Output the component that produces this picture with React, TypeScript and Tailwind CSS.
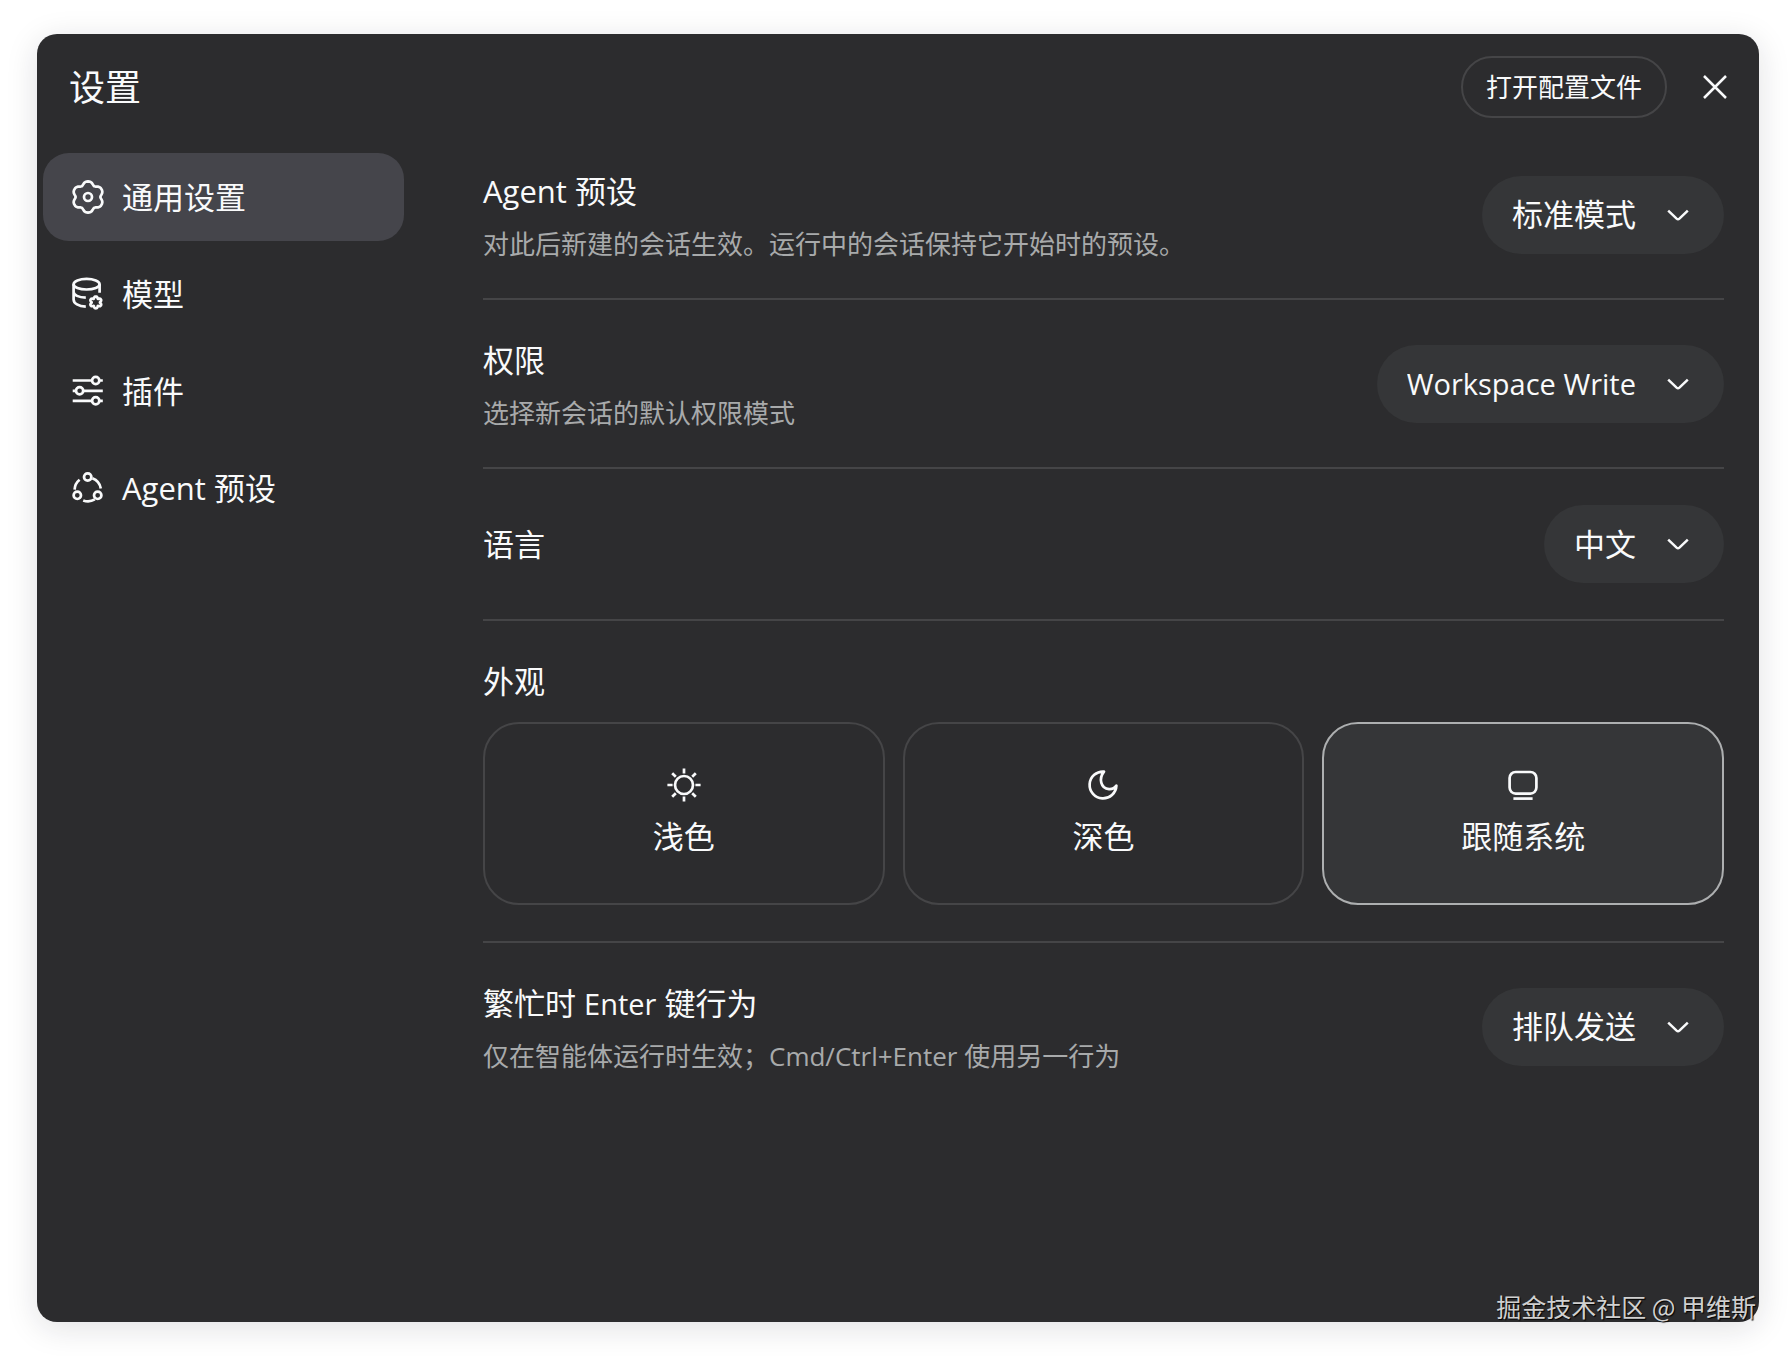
import React, { useState } from 'react';

interface IconProps {
  children: React.ReactNode;
}

interface SelectOption {
  value: string;
  label: string;
}

interface PillSelectProps {
  id: string;
  options: SelectOption[];
  latin?: boolean;
}

interface SettingRowProps extends PillSelectProps {
  title: React.ReactNode;
  description?: string;
  last?: boolean;
}

// Closed outline of a soft six-lobed gear around (cx, cy)
const gearPath = (cx: number, cy: number, radius: number, depth: number) => {
  const points: string[] = [];
  for (let deg = 0; deg < 360; deg += 5) {
    const rad = (deg * Math.PI) / 180;
    // the second harmonic flattens the lobes and tightens the valleys
    const r = radius + depth * Math.cos(6 * rad) - depth * 0.2 * Math.cos(12 * rad);
    points.push(`${(cx + r * Math.sin(rad)).toFixed(2)} ${(cy - r * Math.cos(rad)).toFixed(2)}`);
  }
  return `M${points.join('L')}Z`;
};

const Icon: React.FC<IconProps> = ({ children }) => (
  <svg
    viewBox="0 0 34 34"
    className="size-[34px] shrink-0"
    fill="none"
    stroke="currentColor"
    strokeWidth="2.7"
    strokeLinejoin="round"
    aria-hidden="true"
  >
    {children}
  </svg>
);

const GearIcon = () => (
  <Icon>
    <path d={gearPath(17, 17, 14.3, 1.6)} />
    <circle cx="17" cy="17" r="4" />
  </Icon>
);

const ModelIcon = () => (
  <Icon>
    <ellipse cx="15.6" cy="7.2" rx="13" ry="5.3" />
    <path d="M2.6 7.2V22.5C2.6 26.5 7.5 29.3 14.8 29.6M2.6 15C2.6 18 7.5 20.4 14.8 20.7M28.6 7.2V15.8" />
    <path d={gearPath(24.8, 25.4, 5.2, 0.9)} />
  </Icon>
);

const PluginIcon = () => (
  <Icon>
    <path d="M1.7 6.5H21M28.4 6.5H31.8M1.7 16.8H5M12.4 16.8H31.8M1.7 26.8H21M28.4 26.8H31.8" />
    <circle cx="24.7" cy="6.5" r="3.6" />
    <circle cx="8.6" cy="16.8" r="3.6" />
    <circle cx="24.7" cy="26.8" r="3.6" />
  </Icon>
);

const AgentIcon = () => (
  <Icon>
    <circle cx="16.7" cy="6" r="3.7" />
    <circle cx="6.3" cy="24.3" r="3.7" />
    <circle cx="26.7" cy="24.3" r="3.7" />
    <path d="M3.6 18.6A13.4 13.4 0 0 1 8.6 8.7M21.4 7.2A13.4 13.4 0 0 1 29.8 17.4M12.2 29.4A13.4 13.4 0 0 0 23.8 28.4" />
  </Icon>
);

const SunIcon = () => (
  <Icon>
    <circle cx="17" cy="17" r="9" />
    <path d="M17 .4V5.6M17 28.4V33.6M.4 17H5.6M28.4 17H33.6M5.2 5.2L8.8 8.8M25.2 25.2L28.8 28.8M5.2 28.8L8.8 25.2M25.2 8.8L28.8 5.2" />
  </Icon>
);

const MoonIcon = () => (
  <Icon>
    <path d="M18 3.6A13.4 13.4 0 1 0 30.4 17.6C28.6 20.3 26 21.4 23 21.2C14.5 20.4 12.6 10.4 18 3.6Z" />
  </Icon>
);

const SystemIcon = () => (
  <Icon>
    <rect x="3.6" y="4" width="26.8" height="21.6" rx="6" />
    <path d="M7.4 30.6H26.6" />
  </Icon>
);

const navItems = [
  { id: 'general', label: '通用设置', icon: <GearIcon /> },
  { id: 'models', label: '模型', icon: <ModelIcon /> },
  { id: 'plugins', label: '插件', icon: <PluginIcon /> },
  { id: 'presets', label: 'Agent 预设', icon: <AgentIcon /> },
];

const themes = [
  { id: 'light', label: '浅色', icon: <SunIcon /> },
  { id: 'dark', label: '深色', icon: <MoonIcon /> },
  { id: 'system', label: '跟随系统', icon: <SystemIcon /> },
];

const PillSelect: React.FC<PillSelectProps> = ({ id, options, latin }) => {
  const [value, setValue] = useState(options[0].value);

  return (
    <div className="relative shrink-0">
      <select
        id={id}
        value={value}
        onChange={(e) => setValue(e.target.value)}
        className={`field-sizing-content block h-[78px] cursor-pointer appearance-none rounded-full bg-[#353638] pr-[88px] pl-[30px] text-gray-50 ${
          latin ? 'text-[29px]' : 'text-[31px]'
        }`}
      >
        {options.map((option) => (
          <option key={option.value} value={option.value}>
            {option.label}
          </option>
        ))}
      </select>
      <svg
        viewBox="0 0 24 24"
        className="pointer-events-none absolute inset-y-0 right-[34px] my-auto size-6 text-gray-50"
        fill="none"
        stroke="currentColor"
        strokeWidth="2.5"
        aria-hidden="true"
      >
        <path d="M2.2 7.6L10.6 15.6Q12 16.8 13.4 15.6L21.8 7.6" />
      </svg>
    </div>
  );
};

const SettingRow: React.FC<SettingRowProps> = ({ id, title, description, options, latin, last }) => (
  <div
    className={`flex items-center justify-between gap-8 py-9 ${last ? '' : 'border-b-2 border-[#454547]'}`}
  >
    <div className="min-w-0">
      <label htmlFor={id} className="block text-[31px] leading-[48px] text-gray-50">
        {title}
      </label>
      {description && (
        <p className="mt-[11px] text-[26px] leading-9 text-[#a8aaab]">{description}</p>
      )}
    </div>
    <PillSelect id={id} options={options} latin={latin} />
  </div>
);

export default function App() {
  const [activeNav, setActiveNav] = useState('general');
  const [theme, setTheme] = useState('system');

  return (
    <div className="flex min-h-screen bg-white py-[34px] pr-[31px] pl-[37px] font-['Open_Sans','Noto_Sans_CJK_SC',sans-serif]">
      <div className="flex min-w-0 flex-1 flex-col rounded-[20px] bg-[#2c2c2e] text-gray-50 shadow-[0_6px_32px_rgba(20,20,40,0.13)]">
        <header className="flex h-[97px] items-center justify-between pt-2 pr-8 pl-8">
          <h1 className="pt-0.5 text-[36px] leading-[48px]">设置</h1>
          <div className="flex items-center gap-9">
            <button
              type="button"
              className="h-[62px] cursor-pointer rounded-full border-2 border-[#454547] px-[23px] pt-0.5 text-[26px]"
            >
              打开配置文件
            </button>
            <button type="button" aria-label="关闭" className="cursor-pointer">
              <svg
                viewBox="0 0 24 24"
                className="size-6"
                fill="none"
                stroke="currentColor"
                strokeWidth="2.5"
                aria-hidden="true"
              >
                <path d="M1 1L23 23M23 1L1 23" />
              </svg>
            </button>
          </div>
        </header>

        <div className="flex flex-1">
          <nav className="ml-1.5 flex w-[361px] shrink-0 flex-col gap-[9px] pt-[22px]">
            {navItems.map((item) => (
              <button
                key={item.id}
                type="button"
                onClick={() => setActiveNav(item.id)}
                aria-current={activeNav === item.id ? 'page' : undefined}
                className={`flex h-[88px] cursor-pointer items-center gap-[17px] rounded-[26px] px-7 text-[31px] ${
                  activeNav === item.id ? 'bg-[#45454b]' : ''
                }`}
              >
                {item.icon}
                {item.label}
              </button>
            ))}
          </nav>

          <main className="ml-[79px] min-w-0 flex-1 pr-[35px]">
            <SettingRow
              id="agent-preset"
              title="Agent 预设"
              description="对此后新建的会话生效。运行中的会话保持它开始时的预设。"
              options={[{ value: 'standard', label: '标准模式' }]}
            />
            <SettingRow
              id="permission"
              title="权限"
              description="选择新会话的默认权限模式"
              options={[{ value: 'workspace-write', label: 'Workspace Write' }]}
              latin
            />
            <SettingRow
              id="language"
              title="语言"
              options={[
                { value: 'zh', label: '中文' },
                { value: 'en', label: 'English' },
              ]}
            />

            <fieldset className="border-b-2 border-[#454547] py-9">
              <legend className="float-left w-full text-[31px] leading-[48px]">外观</legend>
              <div className="clear-both grid grid-cols-3 gap-[18px] pt-[17px]">
                {themes.map((item) => (
                  <label
                    key={item.id}
                    className={`flex h-[183px] cursor-pointer flex-col items-center justify-center gap-2.5 rounded-[36px] border-2 ${
                      theme === item.id ? 'border-[#adafb0] bg-[#353638]' : 'border-[#454547]'
                    }`}
                  >
                    <input
                      type="radio"
                      name="theme"
                      value={item.id}
                      checked={theme === item.id}
                      onChange={() => setTheme(item.id)}
                      className="sr-only"
                    />
                    {item.icon}
                    <span className="text-[31px] leading-[48px]">{item.label}</span>
                  </label>
                ))}
              </div>
            </fieldset>

            <SettingRow
              id="busy-enter"
              title={
                <>
                  繁忙时 <span className="text-[29px] leading-none">Enter</span> 键行为
                </>
              }
              description="仅在智能体运行时生效；Cmd/Ctrl+Enter 使用另一行为"
              options={[{ value: 'queue', label: '排队发送' }]}
              last
            />
          </main>
        </div>

        <footer className="pr-[3px] text-right font-['Noto_Sans_CJK_SC',sans-serif] text-[25px] leading-8 text-[#d0d0d0] [text-shadow:1px_1px_1px_#000]">
          掘金技术社区 @ 甲维斯
        </footer>
      </div>
    </div>
  );
}
